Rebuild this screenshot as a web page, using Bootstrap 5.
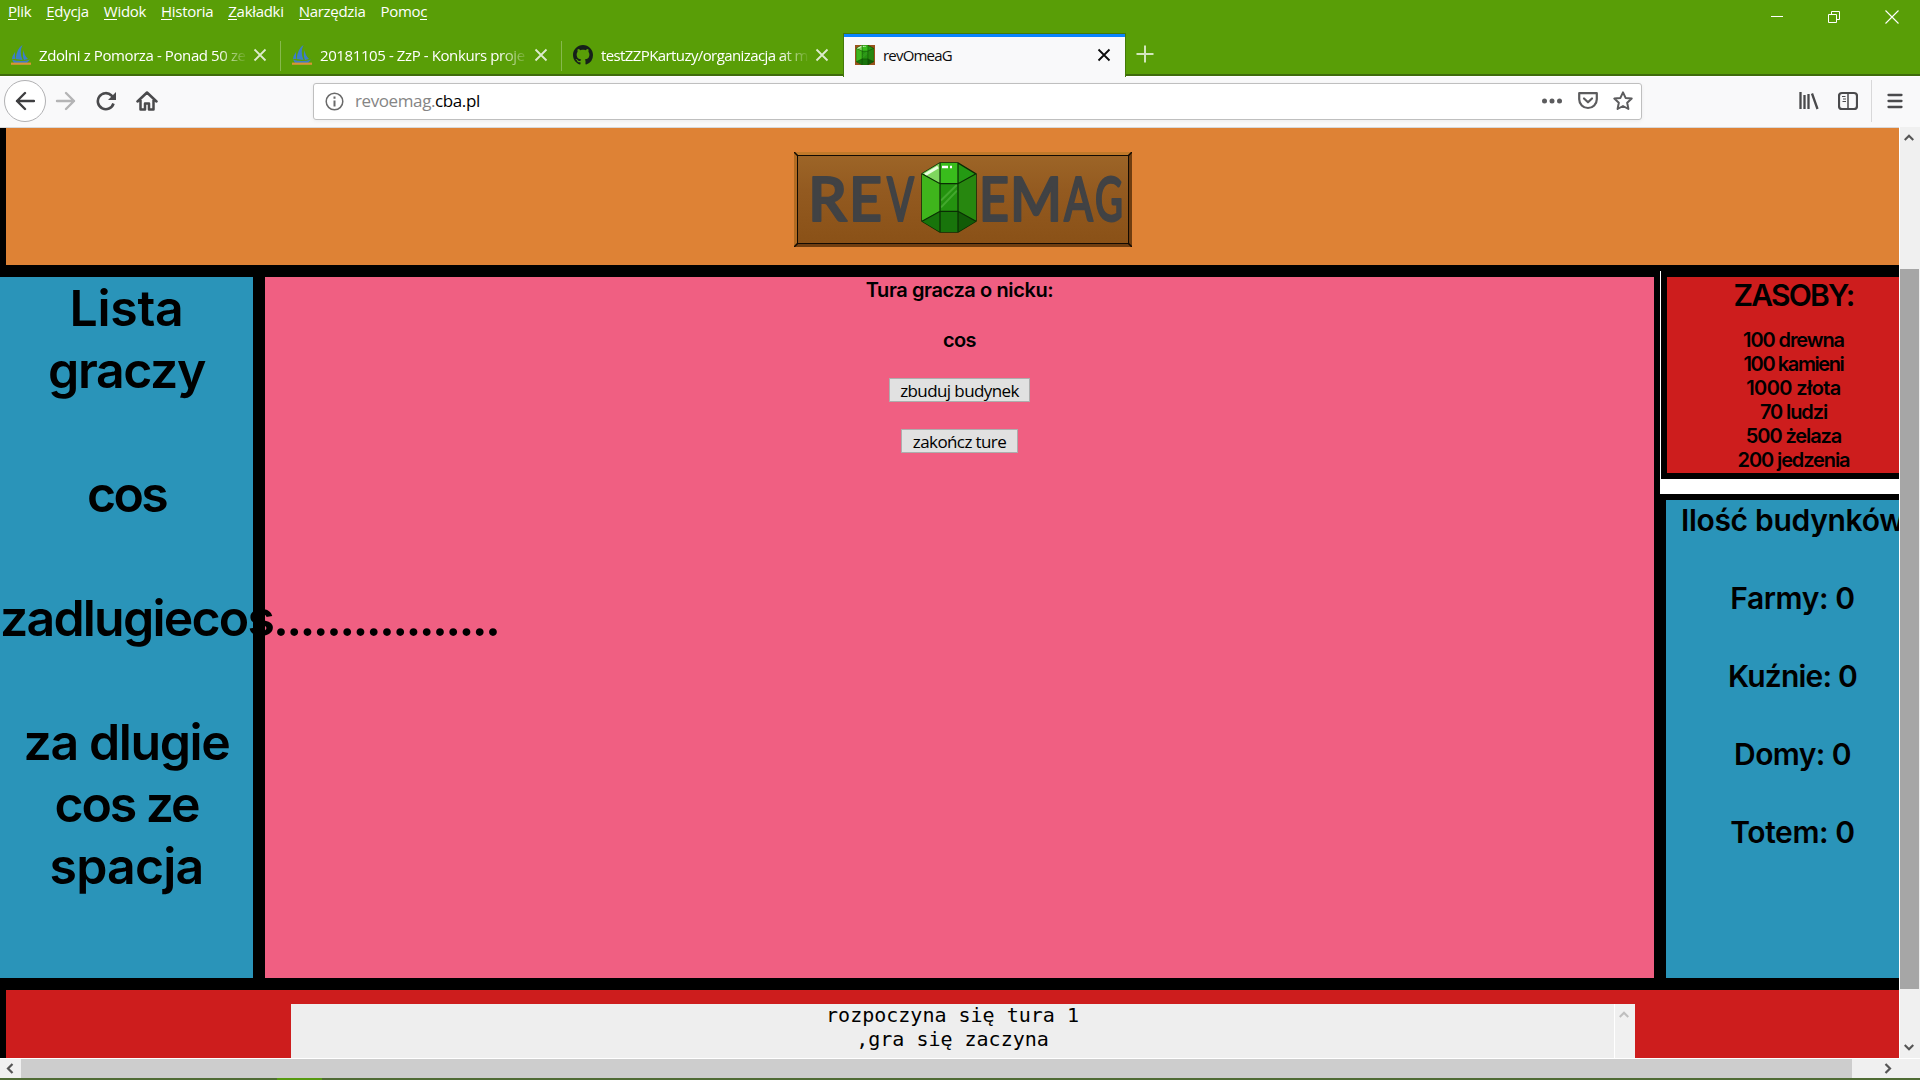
<!DOCTYPE html>
<html lang="pl">
<head>
<meta charset="utf-8">
<title>revOmeaG</title>
<link href="https://cdn.jsdelivr.net/npm/bootstrap@5.3.0/dist/css/bootstrap.min.css" rel="stylesheet">
<style>
body{width:1920px;height:1080px;overflow:hidden;font-family:"Open Sans","Noto Sans",sans-serif;font-size:15px;line-height:20px;color:#000;background:#fff}
svg{display:block;flex:none}
/* letter-spacing steps */
.k3{letter-spacing:-.3px}.k4{letter-spacing:-.4px}.k6{letter-spacing:-.6px}.k8{letter-spacing:-.8px}.k11{letter-spacing:-1.1px}.k14{letter-spacing:-1.4px}.k18{letter-spacing:-1.8px}.k21{letter-spacing:-2.1px}.k27{letter-spacing:-2.7px}
/* browser window */
.chrome-top{height:76px;background:#599e07;color:#fff;border-bottom:2px solid #3f6b0c}
.menu-row{height:34px}
.menu-list{padding:1px 0 0 8px;gap:15px}
.menu-list u{text-decoration:none;display:inline-block;height:19px;border-bottom:1px solid #fff}
.win-buttons{padding:10px 21px 0 0;gap:44px}
.tab-strip{height:42px}
.tab-item{width:281px;height:42px;padding:0 14px 1px 11px;gap:8px;position:relative}
.tab-item+.tab-item:not(.tab-on)::before{content:"";position:absolute;left:-1px;top:7px;height:30px;width:1px;background:#87b94d}
.tab-title{flex:1;overflow:hidden;white-space:nowrap;-webkit-mask-image:linear-gradient(90deg,#000 calc(100% - 30px),transparent);margin-right:-3px}
.tab-on{background:#f9f9fa;border-top:3px solid #0a84ff;color:#0c0c0d;outline:1px solid #447a08;height:43px;padding:0 14px 4px 11px;margin-left:1px;clip-path:inset(-1px -1px 0 -1px)}
.tab-on .tab-title{-webkit-mask-image:none}
.tool-row{height:52px;background:#f9f9fa;border-bottom:1px solid #d8d8d9;border-top:1px solid #fff;padding-bottom:2px}
.back-btn{width:42px;height:42px;border:1px solid #b1b1b3;border-radius:50%;background:#fff}
.gap-reload{margin-left:18px}.gap-home{margin-left:18px}
.url-box{margin-left:155px;width:1329px;height:37px;border:1px solid #bfbfbf;border-radius:3px;background:#fff;padding:0 8px 0 11px;box-shadow:0 1px 4px rgba(0,0,0,.06);font-size:17px}
.url-text{margin-left:11px;color:#858585}
.pocket{margin:0 15px 0 16px}
.gap-library{margin-left:157px}.gap-sidebar{margin-left:19px}.gap-rule{margin-left:13px}.gap-burger{margin-left:14px}
/* game page */
.viewport{height:930px}
.page-area{width:1899px;overflow:hidden;font-family:Inter,"Noto Sans",sans-serif;font-weight:600;text-align:center;background:#000}
.page-head{height:137px;margin-left:6px;background:#de8235;padding:24px 0 0 788px}
.mid-row{height:713px}
.players{width:253px;margin:12px 0 0;background:#2a94b9;height:701px;font-size:50px;line-height:62px;white-space:nowrap;position:relative;z-index:2}
.players p{margin:0 0 62px}
.long-nick{text-align:left}
.board{width:1389px;height:701px;margin:12px 0 0 12px;padding-top:1px;background:#f05f82;font-size:20px;line-height:25px}
.board p{margin:0 0 25px}
.game-btn{display:block;margin:0 auto 27px;height:24px;border:1px solid #adadad;background:#e1e1e1;font:400 17px/22px "Open Sans","Noto Sans",sans-serif;padding:1px 0 0;border-radius:0;color:#000}
.btn-build{width:141px}.btn-end{width:117px}
.side-col{width:239px;margin:6px 0 0 6px}
.res-wrap{height:223px;background:#fff;padding-left:1px}
.res-box{height:208px;border:6px solid #000;border-right:0;background:#cd1d1d;font-size:20px;line-height:24px;padding-top:1px}
.side-col .inner{width:253px}
.res-title{font-size:30px;line-height:35px;height:50px}
.bld-box{height:484px;border:6px solid #000;border-width:6px 0 0 6px;background:#2a94b9;font-size:30px;line-height:39px;white-space:nowrap;overflow:hidden;padding-top:1px}
.bld-box p{margin:0 0 39px}
.foot{height:80px;border-left:6px solid #000;border-top:12px solid #000;background:#cd1d1d;padding:14px 0 0 285px}
.log-box{width:1344px;height:54px;background:#eee;font:400 20px/24px "DejaVu Sans Mono",monospace;overflow:hidden}
.log-text{width:1323px;margin-top:-1px}
.log-bar{width:21px;height:54px;background:#f0f0f0;border-left:1px solid #fff;padding:7px 0 0 4px;color:#bfbfbf}
/* scrollbars and the strip under the window */
.v-bar{width:21px;background:#f0f0f0;border-left:1px solid #fff;margin-top:-1px;color:#555}
.v-bar svg{margin-left:4px}
.arr-up{margin-top:7px;margin-bottom:128px}
.arr-down{margin-top:55px;transform:scaleY(-1)}
.v-thumb{height:720px;width:19px;background:#a6a6a6}
.h-bar{height:20px;border-top:1px solid #fff;background:#f0f0f0}
.h-thumb{width:1831px;height:19px;background:#cdcdcd}
.task-edge{height:2px;background:#4f6b35;padding-left:277px}
.task-edge div{width:45px;height:2px;background:#569a10}
</style>
</head>
<body>
<svg width="0" height="0" class="position-absolute">
<defs>
<symbol id="close" viewBox="0 0 14 14"><path d="M1.500 1.500l11 11m0-11l-11 11" stroke="currentColor" stroke-width="1.800" fill="none"/></symbol>
<symbol id="boat" viewBox="0 0 20 20"><path d="M11.500 0Q6 3 4.500 14l7 1Q8 7 11.500 0zM12.500 5Q11 11 13 15l4-1Q13 10 12.500 5zM4 7Q1 11 1 14l3 0zM1 14.500q9 3 18 0l-3 3.500H3z" fill="#3d7fc6"/><path d="M0 18.700h20" stroke="#d99434" stroke-width="2.200"/></symbol>
<symbol id="gem" viewBox="0 0 56 72" preserveAspectRatio="none"><path d="M1 12L19 1h18l18 11v48L37 71H19L1 60z" fill="#249a13" stroke="#0a2d04" stroke-width="1.500"/><path d="M1 12L19 1v21z" fill="#7fd75e"/><path d="M1 12l18 10v28L1 60z" fill="#3fb51c"/><path d="M19 1h18v21H19z" fill="#39bd1c"/><path d="M19 22h18v28H19z" fill="#24920f"/><path d="M37 22l18-10v48L37 50z" fill="#27870f"/><path d="M1 60l18-10v21zM19 50h18v21H19z" fill="#18740b"/><path d="M37 50l18 10-18 11z" fill="#125b07"/><path d="M20 39l16-16M20 46l16-17" stroke="#58b842" stroke-width="2" opacity=".6"/><path d="M21 5h6M29 5h2" stroke="#fff" stroke-width="2.500"/><path d="M4 13L17 5" stroke="#eaffdf" stroke-width="3"/><path d="M1 12l18 10h18l18-10M1 60l18-10h18l18 10M19 1v70M37 1v70" fill="none" stroke="#0a2d04" stroke-width="1.200"/></symbol>
<symbol id="arr" viewBox="0 0 10 7"><path d="M.7 6L5 1.700 9.300 6" stroke="currentColor" stroke-width="2.200" fill="none"/></symbol>
</defs></svg>

<header class="chrome-top">
 <div class="menu-row d-flex justify-content-between align-items-start">
  <div class="menu-list d-flex k3">
   <span><u>P</u>lik</span><span><u>E</u>dycja</span><span><u>W</u>idok</span><span><u>H</u>istoria</span><span><u>Z</u>akładki</span><span><u>N</u>arzędzia</span><span>Pomo<u>c</u></span>
  </div>
  <div class="win-buttons d-flex">
   <svg width="13" height="14"><path d="M0 6.500h12" stroke="#fff"/></svg>
   <svg width="13" height="14"><path d="M.5 4.500h8v8h-8zM3.500 4.500v-3h8v8h-3" fill="none" stroke="#fff"/></svg>
   <svg width="14" height="14"><path d="M.5.500l13 13m0-13l-13 13" stroke="#fff" stroke-width="1.100"/></svg>
  </div>
 </div>
 <nav class="tab-strip d-flex align-items-start">
  <div class="tab-item d-flex align-items-center"><svg width="20" height="20"><use href="#boat"/></svg><span class="tab-title k4">Zdolni z Pomorza - Ponad 50 ze</span><svg width="14" height="14" opacity=".8"><use href="#close"/></svg></div>
  <div class="tab-item d-flex align-items-center"><svg width="20" height="20"><use href="#boat"/></svg><span class="tab-title k4">20181105 - ZzP - Konkurs proje</span><svg width="14" height="14" opacity=".8"><use href="#close"/></svg></div>
  <div class="tab-item d-flex align-items-center"><svg width="20" height="20" viewBox="0 0 16 16" fill="#16201a"><path d="M8 0C3.580 0 0 3.580 0 8c0 3.540 2.290 6.530 5.470 7.590.4.070.55-.17.55-.38 0-.19-.01-.82-.01-1.490-2.010.37-2.530-.49-2.690-.94-.09-.23-.48-.94-.82-1.130-.28-.15-.68-.52-.01-.53.63-.01 1.080.58 1.230.82.72 1.210 1.870.87 2.330.66.07-.52.28-.87.51-1.070-1.780-.2-3.640-.89-3.640-3.950 0-.87.31-1.590.82-2.150-.08-.2-.36-1.020.08-2.120 0 0 .67-.21 2.200.82.64-.18 1.320-.27 2-.27s1.360.09 2 .27c1.530-1.040 2.200-.82 2.200-.82.44 1.100.16 1.920.08 2.120.51.56.82 1.270.82 2.150 0 3.070-1.870 3.750-3.650 3.950.29.25.54.73.54 1.480 0 1.070-.01 1.930-.01 2.200 0 .21.15.46.55.38A8.010 8.010 0 0 0 16 8c0-4.420-3.580-8-8-8z"/></svg><span class="tab-title k6">testZZPKartuzy/organizacja at m</span><svg width="14" height="14" opacity=".8"><use href="#close"/></svg></div>
  <div class="tab-item tab-on d-flex align-items-center"><svg width="20" height="20"><path d="M0 0h20v20H0z" fill="#99531c"/><use href="#gem" width="18" height="20" x="1"/></svg><span class="tab-title k8">revOmeaG</span><svg width="14" height="14"><use href="#close"/></svg></div>
  <svg class="ms-2" width="26" height="40"><path d="M3.500 20h17M12 11.500v17" stroke="#d3e6bd" stroke-width="2"/></svg>
 </nav>
</header>

<div class="tool-row d-flex align-items-center">
 <div class="back-btn ms-1 d-flex align-items-center justify-content-center"><svg width="20" height="20"><path d="M19 10H2M10 2L2 10l8 8" fill="none" stroke="#3e3e40" stroke-width="2.400" stroke-linecap="round" stroke-linejoin="round"/></svg></div>
 <svg class="ms-2" width="24" height="20"><path d="M3 10h17M12 2l8 8-8 8" fill="none" stroke="#b4b4b5" stroke-width="2.400" stroke-linecap="round" stroke-linejoin="round"/></svg>
 <svg class="gap-reload" width="22" height="20"><path d="M17.500 12.500A8 8 0 1 1 15.500 4.500L17.500 7" fill="none" stroke="#4a4a4c" stroke-width="2.600"/><path d="M20 1v8h-8z" fill="#4a4a4c"/></svg>
 <svg class="gap-home" width="22" height="20"><path d="M1.500 10.500L11 1.500l9.500 9M4.500 9v9.500h4.500v-6h4v6h4.500V9" fill="none" stroke="#4a4a4c" stroke-width="2.500" stroke-linejoin="round" stroke-linecap="round"/></svg>
 <div class="url-box d-flex align-items-center">
  <svg width="19" height="19"><circle cx="9.500" cy="9.500" r="8.300" fill="none" stroke="#6a6a6a" stroke-width="1.500"/><path d="M9.500 8.500v6M9.500 4.500v2.300" stroke="#6a6a6a" stroke-width="2"/></svg>
  <span class="url-text k4">revoemag.<span class="text-black">cba.pl</span></span>
  <svg class="ms-auto" width="20" height="20" fill="#5c5c5e"><circle cx="2.500" cy="10" r="2.500"/><circle cx="10" cy="10" r="2.500"/><circle cx="17.500" cy="10" r="2.500"/></svg>
  <svg class="pocket" width="20" height="20" fill="none" stroke="#5c5c5e" stroke-width="2.200" stroke-linejoin="round"><path d="M1.200 2.200h17.600v6a8.800 8.800 0 0 1-17.600 0z"/><path d="M6 7.500l4 3.800 4-3.800" stroke-linecap="round"/></svg>
  <svg width="20" height="20" fill="none" stroke="#5c5c5e" stroke-width="2" stroke-linejoin="round"><path d="M10 1.300l2.600 5.600 6.100.7-4.500 4.200 1.200 6.200-5.400-3-5.400 3 1.200-6.200L1.300 7.600l6.100-.7z"/></svg>
 </div>
 <svg class="gap-library" width="20" height="20" fill="none" stroke="#4a4a4c"><path d="M1.500 1v17M5.500 4v14M9.500 3v15M13 2.500l5.500 15.500" stroke-width="2.300"/></svg>
 <svg class="gap-sidebar" width="20" height="20" fill="none" stroke="#4a4a4c"><rect x="1" y="2" width="18" height="16" rx="3" stroke-width="2.200"/><path d="M10 2v16" stroke-width="1.500"/><path d="M4 5.500h3.500M5 8h3M4.500 10.500H8"/></svg>
 <svg class="gap-rule" width="2" height="42"><path d="M.5 0v42" stroke="#d8d8d9"/></svg>
 <svg class="gap-burger" width="16" height="20"><path d="M1.500 4h13M1.500 10h13M1.500 16h13" stroke="#4a4a4c" stroke-width="2.300" stroke-linecap="round"/></svg>
</div>

<main class="viewport d-flex">
 <div class="page-area">
  <div class="page-head">
   <svg width="338" height="95" viewBox="0 0 338 95" font-family="Lato,sans-serif">
    <defs><linearGradient id="wood" x2="0" y2="1"><stop offset="0" stop-color="#9d6527"/><stop offset=".4" stop-color="#935a20"/><stop offset="1" stop-color="#8a5117"/></linearGradient></defs>
    <path d="M0 0h338v95H0z" fill="#6f3d10"/><path d="M0 0h338l-3 3H3z" fill="#c27a2a"/>
    <path d="M0 0l3 3v89l-3 3z" fill="#b26b22"/>
    <path d="M3.500 3.500h331v88h-331z" fill="url(#wood)" stroke="#130b03"/><path d="M0 0l4 4M338 0l-4 4M0 95l4-4M338 95l-4-4" stroke="#130b03" stroke-width="1.500"/>
    <g fill="#414244" stroke="#414244" stroke-width="2" stroke-linejoin="round" font-size="62">
     <text x="14" y="69" textLength="39" lengthAdjust="spacingAndGlyphs">R</text><text x="55" y="69" textLength="33" lengthAdjust="spacingAndGlyphs">E</text><text x="93" y="69" textLength="27" lengthAdjust="spacingAndGlyphs">V</text>
     <text x="185" y="69" textLength="30" lengthAdjust="spacingAndGlyphs">E</text><text x="216" y="69" textLength="52" lengthAdjust="spacingAndGlyphs">M</text><text x="270" y="69" textLength="29" lengthAdjust="spacingAndGlyphs">A</text><text x="301" y="69" textLength="28" lengthAdjust="spacingAndGlyphs">G</text>
    </g>
    <use href="#gem" x="127" y="10" width="56" height="71"/>
   </svg>
  </div>
  <div class="mid-row d-flex">
   <aside class="players">
    <p><span class="k3">Lista</span><br><span class="k14">graczy</span></p>
    <p><span class="k27">cos</span></p>
    <p class="long-nick"><span class="k18">zadlugiecos</span><span class="k27">.................</span></p>
    <p><span class="k14">za dlugie</span><br><span class="k21">cos ze</span><br><span class="k8">spacja</span></p>
   </aside>
   <section class="board">
    <p class="k4">Tura gracza o nicku:</p>
    <p class="k6">cos</p>
    <button class="game-btn btn-build k6">zbuduj budynek</button>
    <button class="game-btn btn-end k6">zakończ ture</button>
   </section>
   <aside class="side-col">
    <div class="res-wrap"><div class="res-box"><div class="inner">
     <div class="res-title k18">ZASOBY:</div>
     <span class="k11">100 drewna</span><br><span class="k14">100 kamieni</span><br><span class="k6">1000 złota</span><br><span class="k11">70 ludzi</span><br><span class="k11">500 żelaza</span><br><span class="k11">200 jedzenia</span>
    </div></div></div>
    <div class="bld-box"><div class="inner">
     <p class="k3">Ilość budynków</p><p class="k4">Farmy: 0</p><p class="k8">Kuźnie: 0</p><p class="k6">Domy: 0</p><p class="k4">Totem: 0</p>
    </div></div>
   </aside>
  </div>
  <footer class="foot"><div class="log-box d-flex"><div class="log-text">rozpoczyna się tura 1<br>,gra się zaczyna</div><div class="log-bar"><svg width="10" height="7"><use href="#arr"/></svg></div></div></footer>
 </div>
 <div class="v-bar d-flex flex-column align-items-start">
  <svg class="arr-up" width="10" height="7"><use href="#arr"/></svg>
  <div class="v-thumb"></div>
  <svg class="arr-down" width="10" height="7"><use href="#arr"/></svg>
 </div>
</main>
<div class="h-bar d-flex align-items-center">
 <svg width="21" height="19"><path d="M12.500 5L8 9.500l4.500 4.500" fill="none" stroke="#555" stroke-width="2.200"/></svg>
 <div class="h-thumb"></div>
 <svg width="68" height="19"><path d="M33.500 5L38 9.500 33.500 14" fill="none" stroke="#555" stroke-width="2.200"/></svg>
</div>
<div class="task-edge"><div></div></div>
<script src="https://cdn.jsdelivr.net/npm/bootstrap@5.3.0/dist/js/bootstrap.bundle.min.js"></script>
</body>
</html>
